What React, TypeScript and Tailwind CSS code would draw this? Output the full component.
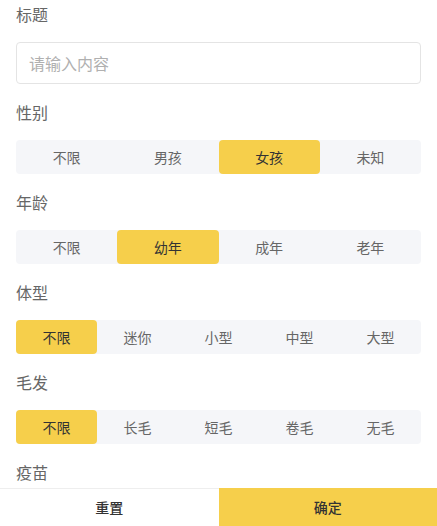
import React, { useState } from "react";

type Group = { title: string; options: string[]; initial: number };

const groups: Group[] = [
	{ title: "性别", options: ["不限", "男孩", "女孩", "未知"], initial: 2 },
	{ title: "年龄", options: ["不限", "幼年", "成年", "老年"], initial: 1 },
	{ title: "体型", options: ["不限", "迷你", "小型", "中型", "大型"], initial: 0 },
	{ title: "毛发", options: ["不限", "长毛", "短毛", "卷毛", "无毛"], initial: 0 },
];

const Segment: React.FC<{ group: Group }> = ({ group }) => {
	const [active, setActive] = useState(group.initial);
	return (
		<div className="flex h-[34px] rounded bg-[#f5f6f9] mt-[14px] mb-[14px]">
			{group.options.map((opt, i) => (
				<button
					key={opt}
					onClick={() => setActive(i)}
					className={
						i === active
							? "flex-1 rounded bg-[#f6cf4b] text-[14px] text-[#333]"
							: "flex-1 rounded text-[14px] text-[#666]"
					}
				>
					{opt}
				</button>
			))}
		</div>
	);
};

const App: React.FC = () => {
	return (
		<div
			className="flex flex-col h-[526px] w-[437px] overflow-hidden bg-white"
			style={{ fontFamily: '"Noto Sans CJK SC", "Noto Sans", sans-serif' }}
		>
			<div className="flex-1 overflow-hidden px-4">
				{/* 标题 */}
				<div className="h-7 leading-7 text-[16px] text-[#666]">标题</div>
				<input
					placeholder="请输入内容"
					className="mt-[14px] mb-[14px] h-[42px] w-full rounded border border-[#e4e4e4] px-3 text-[16px] text-[#333] placeholder:text-[#b0b0b0] outline-none"
				/>

				{groups.map((g) => (
					<div key={g.title}>
						<div className="h-7 leading-7 text-[16px] text-[#666]">{g.title}</div>
						<Segment group={g} />
					</div>
				))}

				<div className="h-7 leading-7 text-[16px] text-[#666]">疫苗</div>
			</div>

			{/* footer buttons */}
			<div className="flex h-[38px] shrink-0">
				<button className="flex-1 border-t border-[#eee] bg-white text-[14px] font-medium text-[#333]">
					重置
				</button>
				<button className="flex-1 bg-[#f6cf4b] text-[14px] font-medium text-[#333]">
					确定
				</button>
			</div>
		</div>
	);
};

export default App;
